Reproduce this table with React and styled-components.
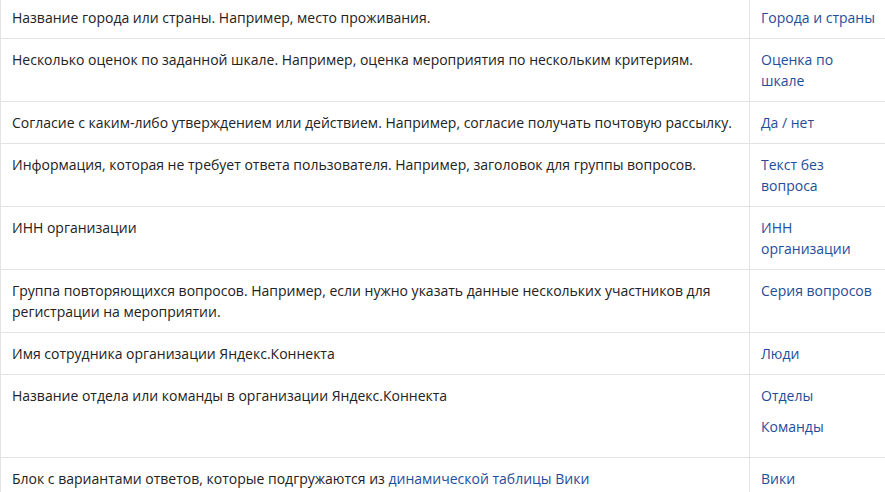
import styled, { createGlobalStyle } from "styled-components";

const GlobalStyle = createGlobalStyle`
  body {
    margin: 0;
    background: #ffffff;
    font-family: "Open Sans", "Noto Sans", sans-serif;
    overflow: hidden;
  }
`;

const Table = styled.table`
  border-collapse: collapse;
  table-layout: fixed;
  width: 888px;
  margin-top: -3px;
  font-size: 14px;
  line-height: 21px;
  color: #222222;
`;

const Row = styled.tr`
  border-bottom: 1px solid #e3e3e3;
`;

const Desc = styled.td`
  width: 726px;
  padding: 10px 11px;
  vertical-align: top;
  border-left: 1px solid #e3e3e3;
  border-right: 1px solid #e3e3e3;
`;

const TypeCell = styled.td`
  padding: 10px 10px 10px 11px;
  vertical-align: top;
  border-right: 1px solid #e3e3e3;
`;

const TypeItem = styled.p`
  margin: 0 0 ${(p) => (p.$stacked ? "10px" : "0")};
`;

const Link = styled.a`
  color: #1f4d9a;
  text-decoration: none;
`;

const rows = [
  {
    text: "Название города или страны. Например, место проживания.",
    types: ["Города и страны"],
  },
  {
    text: "Несколько оценок по заданной шкале. Например, оценка мероприятия по нескольким критериям.",
    types: ["Оценка по шкале"],
  },
  {
    text: "Согласие с каким-либо утверждением или действием. Например, согласие получать почтовую рассылку.",
    types: ["Да / нет"],
  },
  {
    text: "Информация, которая не требует ответа пользователя. Например, заголовок для группы вопросов.",
    types: ["Текст без вопроса"],
  },
  {
    text: "ИНН организации",
    types: ["ИНН организации"],
  },
  {
    text: "Группа повторяющихся вопросов. Например, если нужно указать данные нескольких участников для регистрации на мероприятии.",
    types: ["Серия вопросов"],
  },
  {
    text: "Имя сотрудника организации Яндекс.Коннекта",
    types: ["Люди"],
  },
  {
    text: "Название отдела или команды в организации Яндекс.Коннекта",
    types: ["Отделы", "Команды"],
  },
  {
    text: (
      <>
        Блок с вариантами ответов, которые подгружаются из{" "}
        <Link href="#">динамической таблицы Вики</Link>
      </>
    ),
    types: ["Вики"],
  },
];

export default function App() {
  return (
    <>
      <GlobalStyle />
      <Table>
        <tbody>
          {rows.map((row, i) => (
            <Row key={i}>
              <Desc>{row.text}</Desc>
              <TypeCell>
                {row.types.map((t) => (
                  <TypeItem key={t} $stacked={row.types.length > 1}>
                    <Link href="#">{t}</Link>
                  </TypeItem>
                ))}
              </TypeCell>
            </Row>
          ))}
        </tbody>
      </Table>
    </>
  );
}
